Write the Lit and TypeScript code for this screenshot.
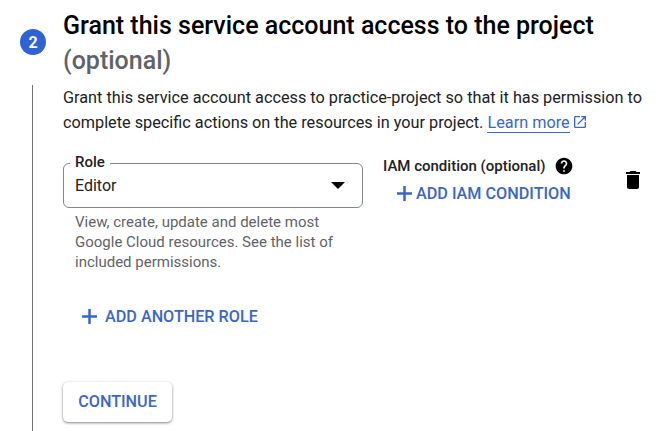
import {LitElement, html, css} from 'lit';
import {customElement} from 'lit/decorators.js';

// the reference plus is heavier than the material one
const plus = html`
  <svg class="plus" width="15" height="15" viewBox="0 0 15 15">
    <path d="M6.25 0h2.5v6.25H15v2.5H8.75V15h-2.5V8.75H0v-2.5h6.25z"></path>
  </svg>
`;

@customElement('app-root')
export class AppRoot extends LitElement {
  static styles = css`
    :host {
      --blue: #3b66c9;
      display: block;
      width: 668px;
      height: 431px;
      overflow: hidden;
      background: #fff;
      color: #202124;
      font-family: Roboto, 'Liberation Sans', sans-serif;
    }

    .step {
      display: grid;
      grid-template-columns: 63px 1fr;
      height: 431px;
    }

    .rail {
      display: flex;
      flex-direction: column;
      align-items: flex-start;
      padding: 29px 0 0 20px;
    }

    .badge {
      width: 26px;
      height: 26px;
      border-radius: 50%;
      background: #2f62d3;
      color: #fff;
      font-size: 16px;
      font-weight: 700;
      display: flex;
      align-items: center;
      justify-content: center;
    }

    .line {
      flex: 1;
      width: 1px;
      margin: 30px 0 0 12px;
      background: #757575;
    }

    h2 {
      margin: 0;
      padding-top: 8px;
      font-size: 25px;
      font-weight: 500;
      line-height: 35px;
      color: #000;
    }

    h2 span {
      display: block;
    }

    h2 .muted {
      color: #5f6368;
    }

    .intro {
      margin: 8px 0 0;
      font-size: 16.25px;
      line-height: 24.5px;
    }

    .intro span {
      display: block;
    }

    .intro a {
      color: var(--blue);
      text-decoration: none;
      border-bottom: 1px solid var(--blue);
    }

    .ext {
      vertical-align: -2px;
      margin-left: 2px;
      fill: var(--blue);
    }

    .binding {
      display: flex;
      margin-top: 28px;
    }

    .role-col {
      width: 300px;
    }

    .select {
      position: relative;
      box-sizing: border-box;
      height: 45px;
      border: 1px solid #80868b;
      border-radius: 6px;
      padding: 0 11px;
      display: flex;
      align-items: center;
      justify-content: space-between;
      font-size: 16px;
    }

    .select label {
      position: absolute;
      left: 6px;
      top: -10px;
      padding: 0 5px;
      background: #fff;
      font-size: 15px;
      font-weight: 500;
      line-height: 16px;
    }

    .arrow {
      width: 0;
      height: 0;
      margin-right: 6px;
      border-left: 7px solid transparent;
      border-right: 7px solid transparent;
      border-top: 7px solid #000;
    }

    .help {
      margin: 4px 0 0;
      padding-left: 12px;
      font-size: 15px;
      line-height: 20px;
      color: #5f6368;
    }

    .cond-col {
      margin-left: 20px;
      width: 220px;
    }

    .cond-label {
      display: flex;
      align-items: center;
      gap: 8px;
      font-size: 15px;
      font-weight: 500;
      height: 20px;
      margin-top: -7px;
    }

    .cond-label svg {
      fill: #000;
    }

    .link {
      display: flex;
      align-items: center;
      color: var(--blue);
      font-size: 16.2px;
      font-weight: 500;
    }

    .plus {
      fill: var(--blue);
      flex: none;
    }

    .cond-col .link {
      gap: 4px;
      height: 24px;
      margin: 5px 0 0 14px;
    }

    .trash {
      margin: 5px 0 0 18px;
    }

    .add-role {
      margin: 32px 0 0 19px;
      gap: 8px;
      height: 24px;
    }

    .continue {
      margin-top: 54px;
      width: 109px;
      height: 40px;
      padding: 0 0 2px;
      border: 0;
      border-radius: 5px;
      background: #fff;
      color: var(--blue);
      font: 500 16.2px Roboto, sans-serif;
      box-shadow: 0 1px 3px rgba(60, 64, 67, 0.5), 0 1px 2px rgba(60, 64, 67, 0.2);
    }
  `;

  render() {
    return html`
      <div class="step">
        <div class="rail">
          <div class="badge">2</div>
          <div class="line"></div>
        </div>
        <div>
          <h2>
            <span>Grant this service account access to the project</span>
            <span class="muted">(optional)</span>
          </h2>
          <p class="intro">
            <span>Grant this service account access to practice-project so that it has permission to</span>
            <span>complete specific actions on the resources in your project. <a>Learn more</a><svg class="ext" width="16" height="16" viewBox="0 0 24 24">
              <path d="M19 19H5V5h7V3H5a2 2 0 0 0-2 2v14a2 2 0 0 0 2 2h14a2 2 0 0 0 2-2v-7h-2v7zM14 3v2h3.59l-9.83 9.83 1.41 1.41L19 6.41V10h2V3h-7z"></path>
            </svg></span>
          </p>
          <div class="binding">
            <div class="role-col">
              <div class="select">
                <label>Role</label>
                <span class="value">Editor</span>
                <span class="arrow"></span>
              </div>
              <p class="help">
                View, create, update and delete most<br />
                Google Cloud resources. See the list of<br />
                included permissions.
              </p>
            </div>
            <div class="cond-col">
              <div class="cond-label">
                IAM condition (optional)
                <svg width="20" height="20" viewBox="0 0 24 24">
                  <path d="M12 2C6.48 2 2 6.48 2 12s4.48 10 10 10 10-4.48 10-10S17.52 2 12 2zm1 17h-2v-2h2v2zm2.07-7.75l-.9.92C13.45 12.9 13 13.5 13 15h-2v-.5c0-1.1.45-2.1 1.17-2.83l1.24-1.26c.37-.36.59-.86.59-1.41 0-1.1-.9-2-2-2s-2 .9-2 2H8c0-2.21 1.79-4 4-4s4 1.79 4 4c0 .88-.36 1.68-.93 2.25z"></path>
                </svg>
              </div>
              <div class="link">${plus}ADD IAM CONDITION</div>
            </div>
            <svg class="trash" width="24" height="24" viewBox="0 0 24 24">
              <path d="M6 19c0 1.1.9 2 2 2h8c1.1 0 2-.9 2-2V7H6v12zM19 4h-3.5l-1-1h-5l-1 1H5v2h14V4z"></path>
            </svg>
          </div>
          <div class="link add-role">${plus}ADD ANOTHER ROLE</div>
          <button class="continue">CONTINUE</button>
        </div>
      </div>
    `;
  }
}
